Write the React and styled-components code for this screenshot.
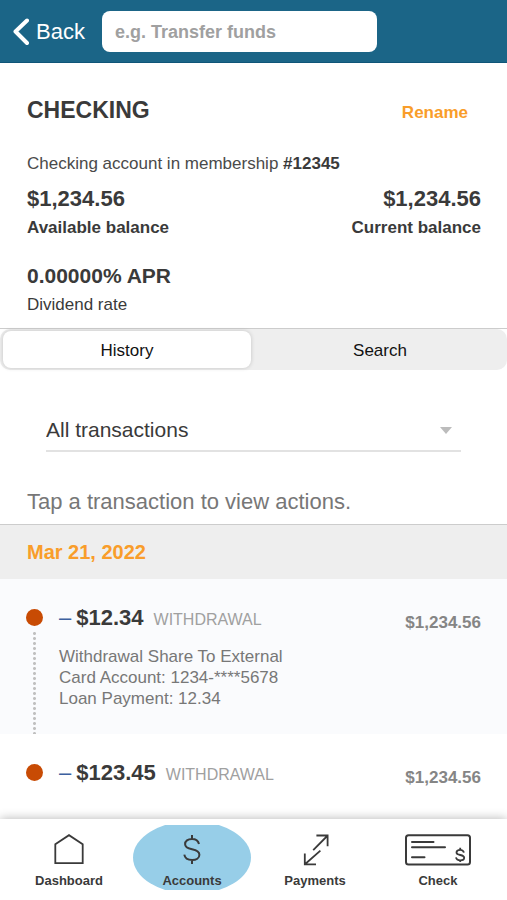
import { useState } from 'react';
import styled, { ThemeProvider, createGlobalStyle } from 'styled-components';

const theme = {
    colors: {
        HEADER: '#1b6587',
        HEADER_LINE: '#0f5578',
        TEXT: '#3a3a3a',
        SOFT_TEXT: '#4a4a4a',
        MUTED: '#777777',
        LIGHT: '#a0a0a0',
        ORANGE: '#f99d2a',
        DOT: '#c84b04',
        MINUS: '#3c60a0',
        GREY: '#eeeeee',
        LINE: '#cccccc',
        ACTIVE: '#97cee8',
    },
};

const GlobalStyle = createGlobalStyle`
    * {
        box-sizing: border-box;
    }

    body {
        margin: 0;
        font-family: "Liberation Sans", Arial, Helvetica, sans-serif;
        font-size: 17px;
        line-height: 20px;
        color: ${theme.colors.TEXT};
        background-color: white;
    }

    button, input, select {
        font: inherit;
        color: inherit;
    }

    h1, h2, p, ul {
        margin: 0;
        padding: 0;
    }
`;

const Page = styled.div`
    display: flex;
    flex-direction: column;
    height: 100vh;
`;

const Header = styled.header`
    display: flex;
    align-items: center;
    flex-shrink: 0;
    gap: 17px;
    padding: 11px 13px 10px;
    background-color: ${props => props.theme.colors.HEADER};
    border-bottom: 1px solid ${props => props.theme.colors.HEADER_LINE};
`;

const BackLink = styled.a`
    display: flex;
    align-items: center;
    gap: 7px;
    font-size: 22px;
    line-height: 28px;
    color: white;
    text-decoration: none;
`;

const SearchInput = styled.input`
    flex: 0 1 275px;
    min-width: 0;
    height: 41px;
    padding: 2px 13px 0;
    border: none;
    border-radius: 8px;
    background-color: white;
    font-size: 18px;
    font-weight: bold;

    &::placeholder {
        color: ${props => props.theme.colors.LIGHT};
        opacity: 1;
    }
`;

const Content = styled.main`
    flex: 1;
    min-height: 0;
    overflow-y: auto;
`;

const Summary = styled.section`
    padding: 33px 26px 13px 27px;
    border-bottom: 1px solid ${props => props.theme.colors.LINE};
`;

const TitleRow = styled.div`
    display: flex;
    align-items: baseline;
    justify-content: space-between;
    padding-right: 13px;
    margin-bottom: 30px;
`;

const Title = styled.h1`
    font-size: 23px;
    line-height: 28px;
`;

const RenameButton = styled.button`
    padding: 0;
    border: none;
    background: none;
    font-weight: bold;
    color: ${props => props.theme.colors.ORANGE};
    cursor: pointer;
`;

const Membership = styled.p`
    color: ${props => props.theme.colors.SOFT_TEXT};

    & > strong {
        color: ${props => props.theme.colors.TEXT};
    }
`;

const Balances = styled.div`
    display: flex;
    justify-content: space-between;
    margin: 11px 0 24px;
`;

const Figure = styled.div`
    display: flex;
    flex-direction: column;
    gap: 5px;
    text-align: ${props => props.$align || 'left'};
    font-weight: ${props => props.$strong ? 'bold' : 'normal'};
`;

const FigureValue = styled.strong`
    font-size: ${props => props.$size || 22}px;
    line-height: 28px;
`;

const Tabs = styled.div`
    display: grid;
    grid-template-columns: 1fr 1fr;
    gap: 5px;
    padding: 2px 3px;
    border-radius: 10px;
    background-color: ${props => props.theme.colors.GREY};
`;

const Tab = styled.button`
    height: 37px;
    padding: 2px 0 0;
    border: none;
    border-radius: 8px;
    color: #111111;
    background-color: ${props => props.$active ? 'white' : 'transparent'};
    box-shadow: ${props => props.$active ? '0 0 4px rgba(0, 0, 0, 0.18)' : 'none'};
    cursor: pointer;
`;

const Filter = styled.div`
    display: grid;
    align-items: center;
    margin: 38px 46px 36px;

    & > * {
        grid-area: 1 / 1;
    }

    & > svg {
        justify-self: end;
        margin-right: 9px;
        pointer-events: none;
    }
`;

const FilterSelect = styled.select`
    appearance: none;
    width: 100%;
    height: 44px;
    padding: 2px 0 0;
    border: none;
    border-bottom: 2px solid #e2e2e2;
    border-radius: 0;
    background: none;
    font-size: 21px;
`;

const Hint = styled.p`
    padding: 0 27px 8px;
    font-size: 22px;
    line-height: 28px;
    color: ${props => props.theme.colors.MUTED};
`;

const DateHeading = styled.h2`
    padding: 0 27px;
    border-top: 1px solid ${props => props.theme.colors.LINE};
    font-size: 20px;
    line-height: 54px;
    color: ${props => props.theme.colors.ORANGE};
    background-color: ${props => props.theme.colors.GREY};
`;

const TransactionList = styled.ul`
    list-style: none;
`;

const Row = styled.li`
    display: flex;
    padding: 0 26px;

    &:nth-child(odd) {
        background-color: #fafbfd;
    }
`;

const Timeline = styled.div`
    display: flex;
    flex-direction: column;
    align-items: center;
    gap: 5px;
    width: 17px;
    margin-right: 16px;
    padding-top: 30px;
`;

const Dot = styled.span`
    width: 17px;
    height: 17px;
    border-radius: 50%;
    background-color: ${props => props.theme.colors.DOT};
`;

const DottedLine = styled.span`
    flex: 1;
    width: 3px;
    background: radial-gradient(circle, #c0c0c0 1px, transparent 2px) top / 3px 5px repeat-y;
`;

const TransactionBody = styled.div`
    flex: 1;
    padding: 25px 0;
`;

const TransactionHead = styled.div`
    display: flex;
    align-items: baseline;
    line-height: 28px;
`;

const Minus = styled.span`
    margin-right: 5px;
    font-size: 22px;
    color: ${props => props.theme.colors.MINUS};
`;

const Amount = styled.strong`
    margin-right: 10px;
    font-size: 22px;
`;

const Kind = styled.span`
    font-size: 16px;
    line-height: 20px;
    color: ${props => props.theme.colors.LIGHT};
`;

const Details = styled.p`
    margin-top: 14px;
    line-height: 21px;
    color: ${props => props.theme.colors.MUTED};
    white-space: pre-line;
`;

const RunningBalance = styled.strong`
    padding-top: 34px;
    color: #858585;
`;

const BottomNav = styled.nav`
    position: relative;
    display: grid;
    grid-template-columns: repeat(4, 1fr);
    flex-shrink: 0;
    gap: 5px;
    padding: 6px 10px 10px;
    background-color: white;
    box-shadow: 0 0 10px rgba(0, 0, 0, 0.3);
`;

const NavLink = styled.a`
    position: relative;
    z-index: 0;
    display: flex;
    flex-direction: column;
    align-items: center;
    gap: 5px;
    height: 65px;
    padding-top: 7px;
    overflow: hidden;
    font-size: 13px;
    font-weight: bold;
    line-height: 16px;
    color: inherit;
    text-decoration: none;

    &::before {
        content: '';
        position: absolute;
        z-index: -1;
        inset: -4px 0;
        border-radius: 50%;
        background-color: ${props => props.$active ? props.theme.colors.ACTIVE : 'transparent'};
    }
`;

const ChevronIcon = () => (
    <svg width="16" height="28" viewBox="0 0 16 28" fill="none" stroke="white" strokeWidth="4" strokeLinecap="round" strokeLinejoin="round" aria-hidden="true">
        <path d="M14 2.5 L2.5 13.5 L14 25" />
    </svg>
);

const CaretIcon = () => (
    <svg width="12" height="7" viewBox="0 0 12 7" fill="#bcbcbc" aria-hidden="true">
        <path d="M0 0 H12 L6 7 Z" />
    </svg>
);

const NavIcon = ({ width = 36, children }) => (
    <svg width={width} height="36" viewBox={`0 0 ${width} 36`} fill="none" stroke="#3a3a3a" strokeWidth="1.8" aria-hidden="true">
        {children}
    </svg>
);

const HomeIcon = () => (
    <NavIcon>
        <path d="M4.3 31.2 V12.3 L18 3.2 L31.7 12.3 V31.2 Z" />
    </NavIcon>
);

const DollarIcon = () => (
    <NavIcon>
        <path d="M18 3 V7 M18 27.8 V32 M25 12 C24.2 8.6 21.8 7 18 7 C13.8 7 11.1 9 11.1 12.2 C11.1 15.5 14 16.4 18 17.3 C22.6 18.3 25.4 19.5 25.4 22.7 C25.4 26.1 22.2 28 18.2 28 C13.8 28 10.9 26.2 10.3 22.6" strokeWidth="2" />
    </NavIcon>
);

const ArrowsIcon = () => (
    <NavIcon>
        <path d="M16.2 18.2 L30.2 4 M19.4 3.5 H30.6 V14.2 M23.4 18.6 L8.2 32 M7.8 21.6 V32.3 H19" />
    </NavIcon>
);

const CheckIcon = () => (
    <NavIcon width={68}>
        <rect x="2" y="3.2" width="64" height="29.4" rx="2.5" strokeWidth="2" />
        <path d="M8 10 H29.5 M8 15.3 H41 M8 25.2 H20.5" strokeWidth="2" strokeLinecap="round" />
        <path d="M56.2 15.8 V17.8 M56.2 28 V30 M59.9 20.6 C59.5 18.8 58.3 17.8 56.2 17.8 C54 17.8 52.5 18.9 52.5 20.5 C52.5 22.2 54 22.6 56.2 23 C58.6 23.5 60.2 24 60.2 25.7 C60.2 27.4 58.5 28.3 56.3 28.3 C53.9 28.3 52.3 27.2 52 25.4" strokeWidth="1.8" />
    </NavIcon>
);

const transactions = [
    {
        id: 1,
        amount: '$12.34',
        kind: 'WITHDRAWAL',
        balance: '$1,234.56',
        details: 'Withdrawal Share To External\nCard Account: 1234-****5678\nLoan Payment: 12.34',
    },
    { id: 2, amount: '$123.45', kind: 'WITHDRAWAL', balance: '$1,234.56' },
];

const navItems = [
    { label: 'Dashboard', Icon: HomeIcon },
    { label: 'Accounts', Icon: DollarIcon },
    { label: 'Payments', Icon: ArrowsIcon },
    { label: 'Check', Icon: CheckIcon },
];

const Transaction = ({ transaction: { amount, kind, balance, details } }) => (
    <Row>
        <Timeline>
            <Dot />
            {details && <DottedLine />}
        </Timeline>
        <TransactionBody>
            <TransactionHead>
                <Minus>–</Minus>
                <Amount>{amount}</Amount>
                <Kind>{kind}</Kind>
            </TransactionHead>
            {details && <Details>{details}</Details>}
        </TransactionBody>
        <RunningBalance>{balance}</RunningBalance>
    </Row>
);

const App = () => {
    const [tab, setTab] = useState('History');

    return (
        <ThemeProvider theme={theme}>
            <GlobalStyle />
            <Page>
                <Header>
                    <BackLink href="#back"><ChevronIcon />Back</BackLink>
                    <SearchInput type="search" aria-label="Search" placeholder="e.g. Transfer funds" />
                </Header>
                <Content>
                    <Summary>
                        <TitleRow>
                            <Title>CHECKING</Title>
                            <RenameButton type="button">Rename</RenameButton>
                        </TitleRow>
                        <Membership>Checking account in membership <strong>#12345</strong></Membership>
                        <Balances>
                            <Figure $strong>
                                <FigureValue>$1,234.56</FigureValue>
                                <span>Available balance</span>
                            </Figure>
                            <Figure $strong $align="right">
                                <FigureValue>$1,234.56</FigureValue>
                                <span>Current balance</span>
                            </Figure>
                        </Balances>
                        <Figure>
                            <FigureValue $size={21}>0.00000% APR</FigureValue>
                            <span>Dividend rate</span>
                        </Figure>
                    </Summary>
                    <Tabs role="tablist">
                        {['History', 'Search'].map(name => (
                            <Tab key={name} type="button" role="tab" aria-selected={tab === name} $active={tab === name} onClick={() => setTab(name)}>
                                {name}
                            </Tab>
                        ))}
                    </Tabs>
                    <Filter>
                        <FilterSelect aria-label="Transaction filter">
                            <option>All transactions</option>
                        </FilterSelect>
                        <CaretIcon />
                    </Filter>
                    <Hint>Tap a transaction to view actions.</Hint>
                    <DateHeading>Mar 21, 2022</DateHeading>
                    <TransactionList>
                        {transactions.map(transaction => <Transaction key={transaction.id} transaction={transaction} />)}
                    </TransactionList>
                </Content>
                <BottomNav>
                    {navItems.map(({ label, Icon }) => (
                        <NavLink key={label} href={`#${label.toLowerCase()}`} $active={label === 'Accounts'}>
                            <Icon />
                            {label}
                        </NavLink>
                    ))}
                </BottomNav>
            </Page>
        </ThemeProvider>
    );
};

export default App;
